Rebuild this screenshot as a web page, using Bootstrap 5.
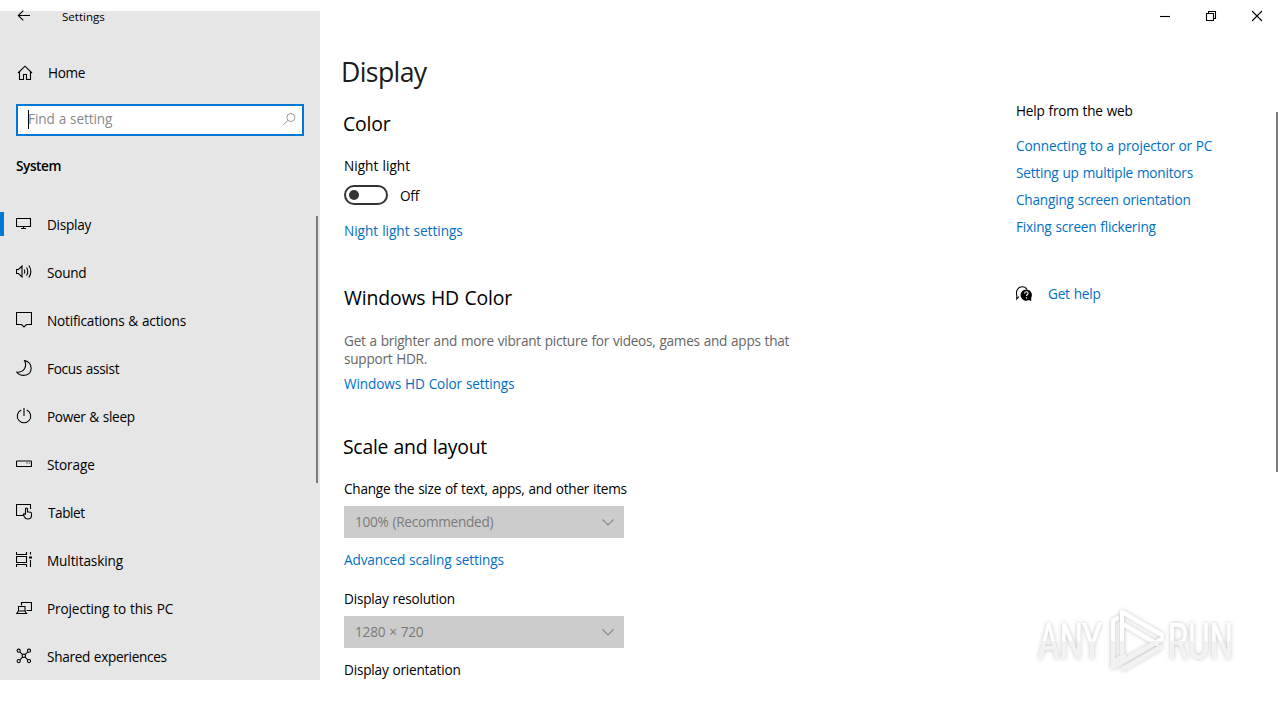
<!DOCTYPE html>
<html lang="en">
<head>
<meta charset="utf-8">
<meta name="viewport" content="width=device-width, initial-scale=1">
<title>Settings</title>
<link href="https://cdn.jsdelivr.net/npm/bootstrap@5.3.0/dist/css/bootstrap.min.css" rel="stylesheet">
<style>
  body { font-family: "Open Sans", "Noto Sans", sans-serif; font-size: 13.6px; line-height: 20px; letter-spacing: -.2px; word-spacing: .6px; color: #000; background: #fff; }
  h1, h2, p { margin: 0; color: #000; }
  h1 { font-size: 26.6px; line-height: 36px; letter-spacing: -.6px; font-weight: 400; margin-left: -3px; color: #1a1a1a; }
  h2 { font-size: 19.4px; line-height: 28px; letter-spacing: -.15px; font-weight: 400; }
  a { color: #0070c6; text-decoration: none; }
  svg { display: block; flex: none; }
  .screen { width: 1280px; height: 680px; }
  .ls-wide { letter-spacing: .02px; }
  .ls-none { letter-spacing: -.03px; }
  .ls-mid { letter-spacing: -.12px; }
  .ls-snug { letter-spacing: -.25px; }
  .ls-tight { letter-spacing: -.31px; }
  .ls-tighter { letter-spacing: -.42px; }
  .line-icon { fill: none; stroke: #000; stroke-width: 1.1; }

  .side { width: 320px; margin-top: 11px; background: #e6e6e6; }
  .side-title { height: 11px; padding-left: 17px; gap: 31px; font-size: 11.6px; letter-spacing: -.02px; }
  .side-title svg { margin-bottom: 1px; }
  .side-home { height: 40px; margin-top: 31px; padding-left: 17px; gap: 15px; }
  .search { height: 32px; margin: 11px 16px 0; border: 2px solid #0078d4; background: #fff; color: #8a8a8a; padding: 0 6px 2px 10px; }
  .search span { margin-left: -1px; }
  .caret { width: 1px; height: 19px; background: #000; }
  .side-group { margin: 20px 16px 0; font-weight: 600; }
  .side-list { margin-top: 25px; }
  .side-list .nav-link { height: 48px; padding: 0 0 0 16px; gap: 15px; color: #000; }
  .side-list svg { margin-bottom: 2px; }
  .marker { width: 4px; height: 24px; background: #0078d4; left: 0; top: 11px; }
  .side-scroll { width: 2px; height: 267px; right: 2px; top: 205px; background: #7a7a7a; }

  .main-col { width: 696px; padding: 54px 0 0 24px; }
  .toggle { width: 44px; height: 20px; border: 2px solid #333; border-radius: 10px; padding-left: 3px; }
  .knob { width: 10px; height: 10px; border-radius: 50%; background: #333; }
  .toggle-label { line-height: 22px; height: 20px; }
  .desc { width: 460px; line-height: 18px; color: #666; }
  .combo { width: 280px; height: 32px; background: #ccc; color: #7a7a7a; padding: 0 9px 0 11px; }
  .outdent { margin-left: -1px; }

  .help-col { width: 264px; padding-top: 101px; }
  .help-links { margin-top: 15px; gap: 7px; }
  .page-scroll { width: 2px; height: 360px; right: 2px; top: 112px; background: #7a7a7a; }
  .caption-btns { right: 17px; top: 10px; gap: 34px; }
  .watermark { left: 1030px; top: 600px; }
  .mt-6 { margin-top: 6px; } .mt-7 { margin-top: 7px; } .mt-9 { margin-top: 9px; }
  .mt-12 { margin-top: 12px; } .mt-16 { margin-top: 16px; } .mt-18 { margin-top: 18px; } .mt-19 { margin-top: 19px; }
  .mt-20 { margin-top: 20px; } .mt-39 { margin-top: 39px; } .mt-43 { margin-top: 43px; } .mt-47 { margin-top: 47px; }
</style>
</head>
<body>
<div class="screen d-flex position-relative overflow-hidden">

  <aside class="side position-relative flex-shrink-0">
    <div class="side-title d-flex align-items-center">
      <svg class="line-icon" width="14" height="12" viewBox="0 0 14 12"><path d="M13 5.500H1.300M6.300.7L1.300 5.500l5 4.800"/></svg>
      <span>Settings</span>
    </div>
    <div class="side-home d-flex align-items-center">
      <svg class="line-icon" width="16" height="16" viewBox="0 0 16 16"><path d="M1 8L8 1.200 15 8M2.500 6.800v7.700h4v-5h3v5h4V6.800"/></svg>
      <span class="ls-tight">Home</span>
    </div>
    <div class="search d-flex align-items-center">
      <div class="caret"></div>
      <span class="ls-mid me-auto">Find a setting</span>
      <svg width="14" height="14" viewBox="0 0 14 14" fill="none" stroke="#999"><circle cx="8.800" cy="5.500" r="4"/><path d="M6 8.300L1 13.300"/></svg>
    </div>
    <div class="side-group ls-tighter">System</div>

    <nav class="side-list nav flex-column flex-nowrap">
      <a class="nav-link active d-flex align-items-center position-relative" href="#">
        <span class="marker position-absolute"></span>
        <svg class="line-icon" width="16" height="16" viewBox="0 0 16 16"><path d="M.5 2.500h14v8H.5zM7.500 10.500v2M5 12.500h5"/></svg><span class="ls-snug">Display</span></a>
      <a class="nav-link d-flex align-items-center" href="#">
        <svg class="line-icon" width="16" height="16" viewBox="0 0 16 16"><path d="M.5 5.500h2l3.500-3.500v11L2.500 9.500h-2zM8.200 5.500q1.300 2 0 4M10.500 3.500q2.600 4 0 8M12.800 1.500q4.200 6 0 12"/></svg><span class="ls-snug">Sound</span></a>
      <a class="nav-link d-flex align-items-center" href="#">
        <svg class="line-icon" width="16" height="16" viewBox="0 0 16 16"><path d="M.5.5h15v12h-5L8 15l-2.500-2.500h-5z"/></svg><span>Notifications &amp; actions</span></a>
      <a class="nav-link d-flex align-items-center" href="#">
        <svg class="line-icon" width="16" height="16" viewBox="0 0 16 16"><path d="M8.500.5C17 2.500 17 13 10 15 6.500 16 2.500 14.800.8 12.200 8 12.500 11.500 6.500 8.500.5z"/></svg><span class="ls-tight">Focus assist</span></a>
      <a class="nav-link d-flex align-items-center" href="#">
        <svg class="line-icon" width="16" height="16" viewBox="0 0 16 16"><path d="M5.200 2A6.700 6.700 0 1 0 10.800 2M8 0v8"/></svg><span class="ls-tight">Power &amp; sleep</span></a>
      <a class="nav-link d-flex align-items-center" href="#">
        <svg class="line-icon" width="16" height="16" viewBox="0 0 16 16"><rect x=".5" y="5" width="15" height="5.500" rx=".8"/><path d="M10.500 7h1M12.800 7h1"/></svg><span class="ls-mid">Storage</span></a>
      <a class="nav-link d-flex align-items-center" href="#">
        <svg class="line-icon" width="17" height="16" viewBox="0 0 17 16"><path d="M7 11.500H.5v-11h14v4.500M9.500 10V4.700q1-1.500 2 0V8q4-.4 4 1.500v2q0 3.500-3.800 3.500-2.200 0-3.200-2L7.200 10.500q.8-1.400 2.300.3"/></svg><span class="ls-tighter">Tablet</span></a>
      <a class="nav-link d-flex align-items-center" href="#">
        <svg class="line-icon" width="16" height="16" viewBox="0 0 16 16"><path d="M.5 0v2.500h10V0M.5 4.500h10v6H.5zM.5 15v-2.500h10V15M14.500 0v2.500M14.500 8v7"/><path d="M13 4.500h3v2h-3z" fill="#000" stroke="none"/></svg><span class="ls-mid">Multitasking</span></a>
      <a class="nav-link d-flex align-items-center" href="#">
        <svg class="line-icon" width="16" height="16" viewBox="0 0 16 16"><path d="M5.500 5.500v-3h10v8h-5M2.500 6.500h6.500v4.500H2.500zM2.500 11L.7 13.500h9.800L9 11"/></svg><span class="ls-mid">Projecting to this PC</span></a>
      <a class="nav-link d-flex align-items-center" href="#">
        <svg class="line-icon" width="16" height="16" viewBox="0 0 16 16"><path d="M3.800 3.800l8 8M11.800 3.800l-8 8"/><g fill="#e6e6e6"><circle cx="2.700" cy="2.700" r="1.600"/><circle cx="13" cy="2.700" r="1.600"/><circle cx="2.700" cy="13.100" r="1.600"/><circle cx="13" cy="13.100" r="1.600"/><circle cx="7.800" cy="7.800" r="1.700"/></g></svg><span class="ls-tight">Shared experiences</span></a>
    </nav>
    <div class="side-scroll position-absolute"></div>
  </aside>

  <main class="main-col flex-shrink-0">
    <h1>Display</h1>
    <h2 class="mt-20 outdent">Color</h2>
    <p class="mt-18 ls-wide">Night light</p>
    <div class="mt-9 d-flex gap-2">
      <div class="toggle d-flex align-items-center"><div class="knob"></div></div>
      <span class="toggle-label ps-1">Off</span>
    </div>
    <a class="d-block mt-16 ls-none" href="#">Night light settings</a>
    <h2 class="mt-43">Windows HD Color</h2>
    <p class="desc mt-20 ls-snug">Get a brighter and more vibrant picture for videos, games and apps that support HDR.</p>
    <a class="d-block mt-6 ls-mid" href="#">Windows HD Color settings</a>
    <h2 class="mt-39 outdent" style="letter-spacing:-.26px">Scale and layout</h2>
    <p class="mt-18 ls-snug">Change the size of text, apps, and other items</p>
    <div class="combo mt-7 d-flex align-items-center justify-content-between"><span class="ls-snug">100% (Recommended)</span>
      <svg width="14" height="9" viewBox="0 0 14 9" fill="none" stroke="#8a8a8a" stroke-width="1.100"><path d="M1.500 1.500L7 7l5.500-5.500"/></svg></div>
    <a class="d-block mt-12 ls-mid" href="#">Advanced scaling settings</a>
    <p class="mt-19">Display resolution</p>
    <div class="combo mt-7 d-flex align-items-center justify-content-between"><span>1280 × 720</span>
      <svg width="14" height="9" viewBox="0 0 14 9" fill="none" stroke="#8a8a8a" stroke-width="1.100"><path d="M1.500 1.500L7 7l5.500-5.500"/></svg></div>
    <p class="mt-12">Display orientation</p>
  </main>

  <aside class="help-col">
    <p>Help from the web</p>
    <div class="help-links d-flex flex-column">
      <a class="ls-mid" href="#" style="word-spacing:.3px">Connecting to a projector or PC</a>
      <a href="#">Setting up multiple monitors</a>
      <a href="#">Changing screen orientation</a>
      <a href="#">Fixing screen flickering</a>
    </div>
    <div class="mt-47 d-flex align-items-center gap-3">
      <svg width="16" height="16" viewBox="0 0 16 16"><path d="M3 10.500L.8 13V9.500C-.5 5 2 1 5.800.8c2.400-.1 4.300.9 5.200 2.700" fill="none" stroke="#000" stroke-width="1.100"/><path d="M10.300 3.500a5.600 5.600 0 0 1 4.900 8.300v3.400l-2.300-1.200A5.600 5.600 0 1 1 10.300 3.500z"/><path d="M8.600 7.500q.2-1.700 1.800-1.700 1.700 0 1.700 1.500 0 .8-.9 1.400-.7.500-.7 1.300M10.500 11.200v1.200" stroke="#fff" stroke-width="1.100" fill="none"/></svg>
      <a href="#">Get help</a>
    </div>
  </aside>

  <div class="page-scroll position-absolute"></div>
  <div class="caption-btns position-absolute d-flex">
    <svg class="line-icon" width="12" height="12" viewBox="0 0 12 12"><path d="M1 6.500h10"/></svg>
    <svg class="line-icon" width="12" height="12" viewBox="0 0 12 12"><path d="M1.500 3.500h7v7h-7zM3.500 3.500v-2h7v7h-2"/></svg>
    <svg class="line-icon" width="12" height="12" viewBox="0 0 12 12"><path d="M1 1l10 10M11 1L1 11"/></svg>
  </div>

  <svg class="watermark position-absolute" width="250" height="80" viewBox="0 0 250 80">
    <defs>
      <filter id="glow" x="-10%" y="-20%" width="120%" height="140%"><feDropShadow dx="0" dy="0" stdDeviation="2" flood-color="#000" flood-opacity=".26"/></filter>
      <linearGradient id="sheen" x1="0" y1="0" x2="0" y2="80" gradientUnits="userSpaceOnUse"><stop offset=".51" stop-color="#fff"/><stop offset=".52" stop-color="#f2f2f2"/></linearGradient>
    </defs>
    <g filter="url(#glow)" fill="url(#sheen)" font-family="Roboto, sans-serif" font-size="50" letter-spacing="0">
      <text x="8" y="59" textLength="64" lengthAdjust="spacingAndGlyphs">ANY</text>
      <text x="138" y="59" textLength="65" lengthAdjust="spacingAndGlyphs">RUN</text>
      <g fill="none" stroke="url(#sheen)" stroke-width="4" stroke-linecap="round" stroke-linejoin="round">
        <path d="M92 53V12l40 23M93 24l34 20"/>
        <path d="M87 18l-4 3v41l11-6M83 62v5l49-28M93 69l38-22"/>
      </g>
    </g>
  </svg>
</div>
</body>
</html>
